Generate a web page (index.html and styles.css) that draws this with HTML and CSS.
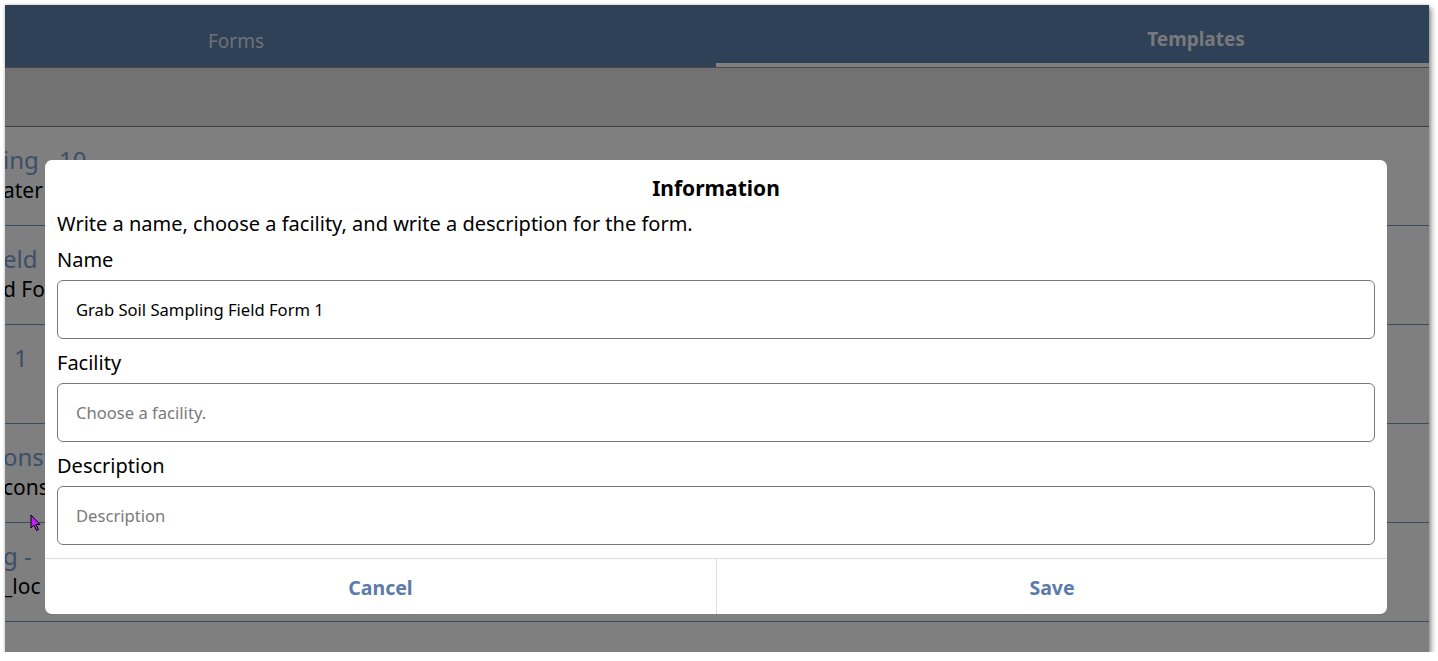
FILE: index.html
```html
<!DOCTYPE html>
<html lang="en">
<head>
<meta charset="utf-8">
<title>Forms</title>
<link rel="stylesheet" href="styles.css">
</head>
<body>
<div class="window">
  <div class="app">
    <div class="tabbar">
      <div class="tabs">
        <div class="tab tab-forms">Forms</div>
        <div class="tab tab-templates is-active">Templates</div>
      </div>
    </div>
    <div class="toolbar"></div>
    <div class="list">
      <div class="row"><div class="row-title">ing - 10</div><div class="row-sub">ater</div></div>
      <div class="row"><div class="row-title">eld</div><div class="row-sub">d For</div></div>
      <div class="row"><div class="row-title row-indent">1</div><div class="row-sub">&nbsp;</div></div>
      <div class="row"><div class="row-title">onst</div><div class="row-sub">cons</div></div>
      <div class="row"><div class="row-title">g -</div><div class="row-sub">_loc</div></div>
    </div>
  </div>

  <div class="scrim">
    <div class="dialog">
      <div class="dialog-body">
        <div class="dialog-title">Information</div>
        <div class="dialog-desc">Write a name, choose a facility, and write a description for the form.</div>
        <div class="field">
          <div class="field-label">Name</div>
          <div class="input">Grab Soil Sampling Field Form 1</div>
        </div>
        <div class="field">
          <div class="field-label">Facility</div>
          <div class="input is-placeholder">Choose a facility.</div>
        </div>
        <div class="field field-last">
          <div class="field-label">Description</div>
          <div class="input is-placeholder">Description</div>
        </div>
      </div>
      <div class="dialog-actions">
        <div class="action">Cancel</div>
        <div class="action">Save</div>
      </div>
    </div>
  </div>

  <svg class="cursor" width="12" height="18" viewBox="0 0 12 18" aria-hidden="true">
    <path d="M1 1 L1 14 L4 11 L6.5 16.5 L8.5 15.5 L6 10.5 L10 10.5 Z" fill="#c21cff" stroke="#000" stroke-width="1" stroke-linejoin="miter"/>
  </svg>
</div>
</body>
</html>
```

FILE: styles.css
```css
* { box-sizing: border-box; }

html, body {
  margin: 0;
  padding: 0;
  background: #ffffff;
}

body {
  font-family: "Noto Sans", "Open Sans", sans-serif;
  color: #000;
}

.window {
  position: relative;
  margin: 5px 0 0 5px;
  width: 1424px;
  height: 647px;
  overflow: hidden;
  background: #ffffff;
  box-shadow: 0 0 3px rgba(0,0,0,0.25), 3px 3px 5px rgba(0,0,0,0.35);
}

.app {
  display: flex;
  flex-direction: column;
  height: 100%;
}

/* tab bar (scrolled horizontally, like the app) */
.tabbar {
  height: 63px;
  background: #5e82ae;
  overflow: hidden;
  border-bottom: 1px solid #949494;
  flex: none;
}

.tabs {
  display: flex;
  width: 1920px;
  margin-left: -249px;
  height: 100%;
}

.tab {
  width: 960px;
  height: 100%;
  text-align: center;
  font-size: 19px;
  color: #ffffff;
}

.tab-forms {
  padding-top: 23px;
  color: rgba(255,255,255,0.78);
}

.tab-templates {
  padding-top: 22px;
  font-weight: 700;
  font-size: 19px;
  line-height: 24px;
  color: rgba(255,255,255,0.92);
  border-bottom: 4px solid #ffffff;
}

.toolbar {
  height: 59px;
  background: #e4e4e4;
  border-bottom: 1px solid #7e7e7e;
  flex: none;
}

.list {
  display: flex;
  flex-direction: column;
}

.row {
  height: 99px;
  border-bottom: 1px solid #7797c6;
  padding-top: 16px;
  margin-left: -2px;
}

.row-title {
  font-size: 24px;
  line-height: 33px;
  color: #7c9cd0;
}

.row-indent { padding-left: 11px; }

.row-sub {
  font-size: 21px;
  line-height: 28px;
  color: #000;
}

/* modal overlay */
.scrim {
  position: absolute;
  inset: 0;
  background: rgba(0,0,0,0.5);
  display: flex;
  justify-content: center;
  align-items: flex-start;
  padding-top: 155px;
  padding-right: 2px;
}

.dialog {
  width: 1342px;
  background: #ffffff;
  border-radius: 7px;
  display: flex;
  flex-direction: column;
  overflow: hidden;
}

.dialog-body {
  padding: 14px 12px 13px;
  display: flex;
  flex-direction: column;
}

.dialog-title {
  text-align: center;
  font-weight: 700;
  font-size: 21px;
  line-height: 28px;
  margin-bottom: 10px;
}

.dialog-desc {
  font-size: 20px;
  line-height: 24px;
  margin-bottom: 12px;
}

.field { margin-bottom: 12px; }
.field-last { margin-bottom: 0; }

.field-label {
  font-size: 20px;
  line-height: 24px;
  margin-bottom: 8px;
}

.input {
  height: 59px;
  border: 1px solid #7a7a7a;
  border-radius: 6px;
  padding: 0 18px;
  display: flex;
  align-items: center;
  font-size: 16.6px;
  color: #000;
}

.input.is-placeholder { color: #7a7a7a; }

.dialog-actions {
  display: grid;
  grid-template-columns: 1fr 1fr;
  border-top: 1px solid #dcdcdc;
  height: 56px;
}

.action {
  display: flex;
  align-items: center;
  justify-content: center;
  padding-top: 2px;
  font-weight: 700;
  font-size: 19.5px;
  color: #5b7cab;
}

.action + .action { border-left: 1px solid #dcdcdc; }

.cursor {
  position: absolute;
  left: 25px;
  top: 509px;
}
```
